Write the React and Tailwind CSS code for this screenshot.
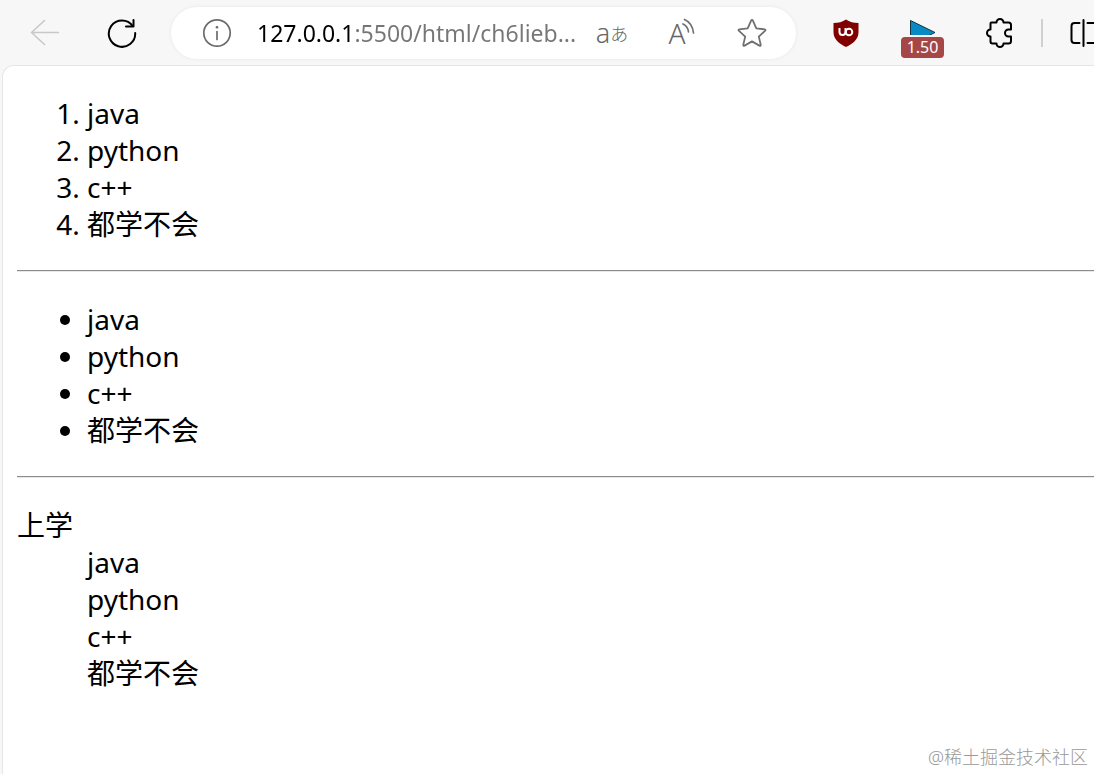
import { useState } from "react";

const subjects = ["java", "python", "c++", "都学不会"];

function IconButton({ label, className = "", disabled, children }) {
  return (
    <button
      type="button"
      aria-label={label}
      disabled={disabled}
      className={"relative flex h-11 shrink-0 items-center justify-center " + className}
    >
      {children}
    </button>
  );
}

function BackIcon() {
  return (
    <svg width="30" height="30" viewBox="0 0 30 30" fill="none" stroke="#c8c8c8" strokeWidth="1.6" strokeLinecap="round" strokeLinejoin="round">
      <path d="M28.5 14.5H1.5M14.5 2.5 1.5 14.5l13 12" />
    </svg>
  );
}

function ReloadIcon() {
  return (
    <svg width="30" height="30" viewBox="0 0 30 30" fill="none" stroke="#000" strokeWidth="2" strokeLinecap="round" strokeLinejoin="round">
      <path d="M28.2 15A13.2 13.2 0 1 1 25.8 8" />
      <path d="M26.5 2v6.500H19" />
    </svg>
  );
}

function InfoIcon() {
  return (
    <svg width="30" height="30" viewBox="0 0 30 30" fill="none" stroke="#6b6b6b" strokeWidth="1.7" strokeLinecap="round">
      <circle cx="15" cy="15" r="13.2" />
      <path d="M15 13.5v8" />
      <circle cx="15" cy="9.3" r="1.3" fill="#6b6b6b" stroke="none" />
    </svg>
  );
}

function SoundWaves() {
  return (
    <svg width="14" height="18" viewBox="0 0 14 18" fill="none" stroke="#707070" strokeWidth="1.7" strokeLinecap="round">
      <path d="M1 6Q6 8.500 6.500 14" />
      <path d="M2.500 1.500Q10.500 5 11.500 15" />
    </svg>
  );
}

function StarIcon() {
  return (
    <svg width="30" height="30" viewBox="0 0 30 30" fill="none" stroke="#707070" strokeWidth="1.8" strokeLinejoin="round">
      <path d="M14.1 2.6Q15 1 15.9 2.6L19.3 10.4 27.6 11.3Q29.2 11.6 28 12.9L21.8 18.6 23.7 26.6Q24 28.4 22.4 27.6L15 23.4 7.6 27.6Q6 28.4 6.3 26.6L8.2 18.6 2 12.9Q.8 11.6 2.4 11.3L10.7 10.4Z" />
    </svg>
  );
}

function ShieldIcon() {
  return (
    <svg width="28" height="28" viewBox="0 0 28 28" fill="none">
      <path d="M14 .5C10.5 3 6.5 4 1.500 4V13C1.500 20.500 7 24.500 14 28 21 24.500 26.500 20.500 26.500 13V4C21.500 4 17.500 3 14 .5Z" fill="#800000" />
      <path d="M7.500 9V13a3 3 0 0 0 6 0V9" stroke="#fff" strokeWidth="2" />
      <circle cx="17" cy="13" r="3.300" stroke="#fff" strokeWidth="2" />
    </svg>
  );
}

function PlayIcon() {
  return (
    <svg width="28" height="28" viewBox="0 0 28 28">
      <path d="M1.500 1.500 26 13.500 1.500 25.500Z" fill="#0a8ac4" stroke="#12323f" strokeWidth="1" />
      <path d="M0 16H28V28H0Z" fill="#f7f7f7" />
    </svg>
  );
}

function PuzzleIcon() {
  return (
    <svg width="30" height="30" viewBox="0 0 30 30" fill="none" stroke="#000" strokeWidth="2" strokeLinejoin="round">
      <path d="M6.500 4.500H11.500A3.500 3.500 0 0 1 18.500 4.500H23.500Q26 4.500 26 7V11.500H23.500A3.300 3.300 0 0 0 23.500 18.500H26V23Q26 25.500 23.500 25.500H18.500A3.500 3.500 0 0 1 11.500 25.500H7.500Q5.500 25.500 5.500 23.500V18.500A3.500 3.500 0 0 1 5.500 11.500V5.500Q5.500 4.500 6.500 4.500Z" />
    </svg>
  );
}

function SplitIcon() {
  return (
    <svg width="28" height="30" viewBox="0 0 28 30" fill="none" stroke="#000" strokeWidth="2" strokeLinecap="round" className="shrink-0">
      <path d="M9.500 5H4.500Q1.500 5 1.500 8V22Q1.500 25 4.500 25H9.500" />
      <path d="M13.500 2V28" />
      <path d="M17.500 5H23.500Q26.500 5 26.500 8V22Q26.500 25 23.500 25H17.500" />
    </svg>
  );
}

function Toolbar() {
  const [url, setUrl] = useState("127.0.0.1:5500/html/ch6lieb...");

  return (
    <header className="flex h-[65px] items-center overflow-hidden pl-1.5">
      <IconButton label="后退" className="w-[77px]" disabled>
        <BackIcon />
      </IconButton>
      <IconButton label="刷新" className="w-[77px]">
        <ReloadIcon />
      </IconButton>

      <div className="mx-[11px] flex h-[52px] min-w-0 flex-1 items-center rounded-full bg-white pr-[9px] pl-[11px] shadow-[0_0_3px_1px_#ededed]">
        <IconButton label="查看站点信息" className="w-[70px]">
          <InfoIcon />
        </IconButton>
        {/* host is black, the rest of the address is gray */}
        <input
          type="text"
          aria-label="地址栏"
          value={url}
          onChange={(e) => setUrl(e.target.value)}
          className="ml-[5px] min-w-0 flex-1 bg-linear-to-r from-black from-[94px] to-[#767676] to-[94px] bg-clip-text font-[Noto_Sans,sans-serif] text-[23px] leading-8 text-transparent caret-black outline-none"
        />
        <IconButton label="翻译" className="w-[70px] font-light text-[#666666]">
          <span className="font-[Noto_Sans,sans-serif] text-[27px] leading-7">a</span>
          <span className="font-[Noto_Sans_CJK_JP,sans-serif] text-[18px] leading-7">あ</span>
        </IconButton>
        <IconButton label="大声朗读" className="w-[70px] text-[#666666]">
          <span className="font-[Noto_Sans,sans-serif] text-[28px] font-light leading-7">A</span>
          <span className="-ml-1 mb-3">
            <SoundWaves />
          </span>
        </IconButton>
        <IconButton label="收藏" className="w-[70px]">
          <StarIcon />
        </IconButton>
      </div>

      <IconButton label="uBlock Origin" className="w-[77px]">
        <ShieldIcon />
      </IconButton>
      <IconButton label="播放速度" className="w-[77px]">
        <PlayIcon />
        <span className="absolute inset-x-[17px] top-[26px] h-[21px] rounded-sm bg-[#a54747] text-center font-[Noto_Sans,sans-serif] text-[16px] leading-[21px] text-white">
          1.50
        </span>
      </IconButton>
      <IconButton label="扩展" className="w-[77px]">
        <PuzzleIcon />
      </IconButton>
      <div className="ml-[3px] h-7 w-0.5 shrink-0 bg-[#d0d0d0]" />
      <IconButton label="分屏" className="ml-[27px] w-6 justify-start overflow-hidden">
        <SplitIcon />
      </IconButton>
    </header>
  );
}

function Divider() {
  return <hr className="mt-[27px] mb-[29px] h-0.5 border-t border-b border-t-[#8c8c8c] border-b-[#e8e8e8]" />;
}

function App() {
  const items = subjects.map((name) => <li key={name}>{name}</li>);

  return (
    <div className="flex min-h-screen flex-col bg-[#f7f7f7]">
      <Toolbar />

      <main
        lang="zh-CN"
        className="relative ml-0.5 flex-1 rounded-tl-xl border-t border-l border-[#e6e6e6] bg-white pt-[29px] pb-7 pl-3.5 font-[Noto_Sans,Noto_Sans_CJK_SC,sans-serif] text-[28px] leading-[37px] text-black"
      >
        <ol className="list-decimal pl-[70px]">{items}</ol>
        <Divider />
        <ul className="list-disc pl-[70px]">{items}</ul>
        <Divider />
        <dl>
          <dt>上学</dt>
          {subjects.map((name) => (
            <dd key={name} className="pl-[70px]">{name}</dd>
          ))}
        </dl>

        <p className="absolute right-1.5 bottom-[5px] text-[18px] font-light leading-6 text-[#999999]">
          @稀土掘金技术社区
        </p>
      </main>
    </div>
  );
}

export default App;
